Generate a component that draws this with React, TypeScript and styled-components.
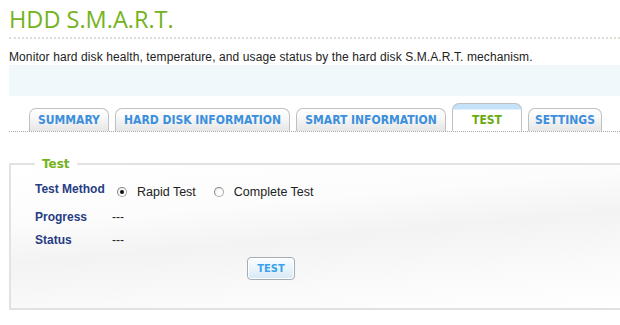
import React, { useState } from "react";
import styled, { createGlobalStyle } from "styled-components";

const GlobalStyle = createGlobalStyle`
  html, body {
    margin: 0;
    padding: 0;
    background: #ffffff;
  }
  body {
    font-family: "Liberation Sans", Arial, sans-serif;
    overflow: hidden;
  }
`;

const Page = styled.div`
  width: 620px;
  height: 325px;
  padding-left: 9px;
  box-sizing: border-box;
  overflow: hidden;
`;

const Title = styled.h1`
  margin: 0;
  padding-top: 5px;
  font-family: "Open Sans", "DejaVu Sans", sans-serif;
  font-weight: 400;
  font-size: 23.5px;
  line-height: 28px;
  color: #74b31c;
`;

const Divider = styled.div`
  margin-top: 4px;
  height: 0;
  border-top: 2px dotted #dcdcd4;
`;

const Description = styled.p`
  margin: 11px 0 0;
  font-size: 12px;
  line-height: 14px;
  letter-spacing: 0.1px;
  color: #222;
`;

const InfoBand = styled.div`
  margin-top: 1px;
  height: 31px;
  background: #f1f8fc;
`;

const TabBar = styled.div`
  display: flex;
  align-items: flex-end;
  gap: 6px;
  height: 35px;
  padding-left: 20px;
  border-bottom: 1px dotted #a8a8a8;
`;

const Tab = styled.div<{ $active?: boolean; $width: number }>`
  width: ${(p) => p.$width}px;
  height: ${(p) => (p.$active ? "28px" : "23px")};
  box-sizing: border-box;
  display: flex;
  align-items: center;
  justify-content: center;
  white-space: nowrap;
  border: 1px solid #c0c0c0;
  border-bottom: none;
  border-radius: 7px 7px 0 0;
  font-family: "DejaVu Sans Condensed", "DejaVu Sans", Verdana, sans-serif;
  font-stretch: condensed;
  font-weight: 700;
  font-size: 12px;
  color: ${(p) => (p.$active ? "#6aab12" : "#3b8fdc")};
  background: ${(p) =>
    p.$active
      ? "linear-gradient(#c6e2f8 0, #c6e2f8 5px, #ffffff 6px, #ffffff 100%)"
      : "linear-gradient(#ffffff 0%, #fafafa 30%, #e6e6e6 100%)"};
  padding-top: ${(p) => (p.$active ? "4px" : "0")};
  cursor: pointer;
`;

const Fieldset = styled.fieldset`
  margin: 25px 0 0;
  width: 640px;
  height: 153px;
  box-sizing: border-box;
  padding: 11px 0 0 24px;
  border: 2px solid #e2e2e2;
  border-right: none;
  background: linear-gradient(
    175deg,
    #ffffff 0%,
    #fcfcfc 30%,
    #f3f3f3 50%,
    #fafafa 75%,
    #ffffff 100%
  );
`;

const Legend = styled.legend`
  margin-left: 0;
  padding: 0 7px;
  font-family: "DejaVu Sans", Verdana, sans-serif;
  font-weight: 700;
  font-size: 12px;
  color: #74b31c;
`;

const FormGrid = styled.div`
  display: grid;
  grid-template-columns: 77px auto;
`;

const Label = styled.div<{ $height: number }>`
  height: ${(p) => p.$height}px;
  font-weight: 700;
  font-size: 12px;
  line-height: 14px;
  color: #283c84;
`;

const Value = styled.div<{ $height: number }>`
  height: ${(p) => p.$height}px;
  font-size: 12px;
  line-height: 14px;
  color: #222;
  display: flex;
  align-items: flex-start;
`;

const RadioGroup = styled.div`
  display: flex;
  align-items: center;
  gap: 18px;
  margin-top: 3px;
  margin-left: 5px;
`;

const RadioOption = styled.label`
  display: flex;
  align-items: center;
  gap: 10px;
  font-size: 12.5px;
  color: #222;
  cursor: pointer;
`;

const RadioCircle = styled.span<{ $checked?: boolean }>`
  width: 10px;
  height: 10px;
  box-sizing: border-box;
  border-radius: 50%;
  border: 1px solid #a8a8a8;
  border-top-color: #8a8a8a;
  border-left-color: #8a8a8a;
  background: radial-gradient(circle at 65% 65%, #ffffff 30%, #e4e4e4 100%);
  display: flex;
  align-items: center;
  justify-content: center;
  &::after {
    content: "";
    width: 4px;
    height: 4px;
    border-radius: 50%;
    background: ${(p) => (p.$checked ? "#111" : "transparent")};
  }
`;

const ButtonRow = styled.div`
  padding-left: 212px;
  margin-top: 1px;
`;

const Button = styled.button`
  width: 48px;
  height: 23px;
  border: 1px solid #a6adb2;
  border-radius: 4px;
  background: linear-gradient(#fbfdff 0%, #eaf4fb 50%, #d6e9f6 100%);
  box-shadow: inset 0 0 0 1px #ffffff;
  font-family: "DejaVu Sans Condensed", "DejaVu Sans", Verdana, sans-serif;
  font-stretch: condensed;
  font-weight: 700;
  font-size: 11px;
  color: #3aa2ee;
  cursor: pointer;
  padding: 0;
`;

const tabs = [
  { name: "SUMMARY", width: 80 },
  { name: "HARD DISK INFORMATION", width: 175 },
  { name: "SMART INFORMATION", width: 150 },
  { name: "TEST", width: 70 },
  { name: "SETTINGS", width: 74 },
];

export default function App() {
  const [method, setMethod] = useState("rapid");
  const [activeTab, setActiveTab] = useState("TEST");

  return (
    <Page>
      <GlobalStyle />
      <Title>HDD S.M.A.R.T.</Title>
      <Divider />
      <Description>
        Monitor hard disk health, temperature, and usage status by the hard
        disk S.M.A.R.T. mechanism.
      </Description>
      <InfoBand />
      <TabBar>
        {tabs.map((t) => (
          <Tab
            key={t.name}
            $width={t.width}
            $active={t.name === activeTab}
            onClick={() => setActiveTab(t.name)}
          >
            {t.name}
          </Tab>
        ))}
      </TabBar>
      <Fieldset>
        <Legend>Test</Legend>
        <FormGrid>
          <Label $height={28}>Test Method</Label>
          <Value $height={28}>
            <RadioGroup>
              <RadioOption onClick={() => setMethod("rapid")}>
                <RadioCircle $checked={method === "rapid"} />
                Rapid Test
              </RadioOption>
              <RadioOption onClick={() => setMethod("complete")}>
                <RadioCircle $checked={method === "complete"} />
                Complete Test
              </RadioOption>
            </RadioGroup>
          </Value>
          <Label $height={23}>Progress</Label>
          <Value $height={23}>---</Value>
          <Label $height={23}>Status</Label>
          <Value $height={23}>---</Value>
        </FormGrid>
        <ButtonRow>
          <Button>TEST</Button>
        </ButtonRow>
      </Fieldset>
    </Page>
  );
}
